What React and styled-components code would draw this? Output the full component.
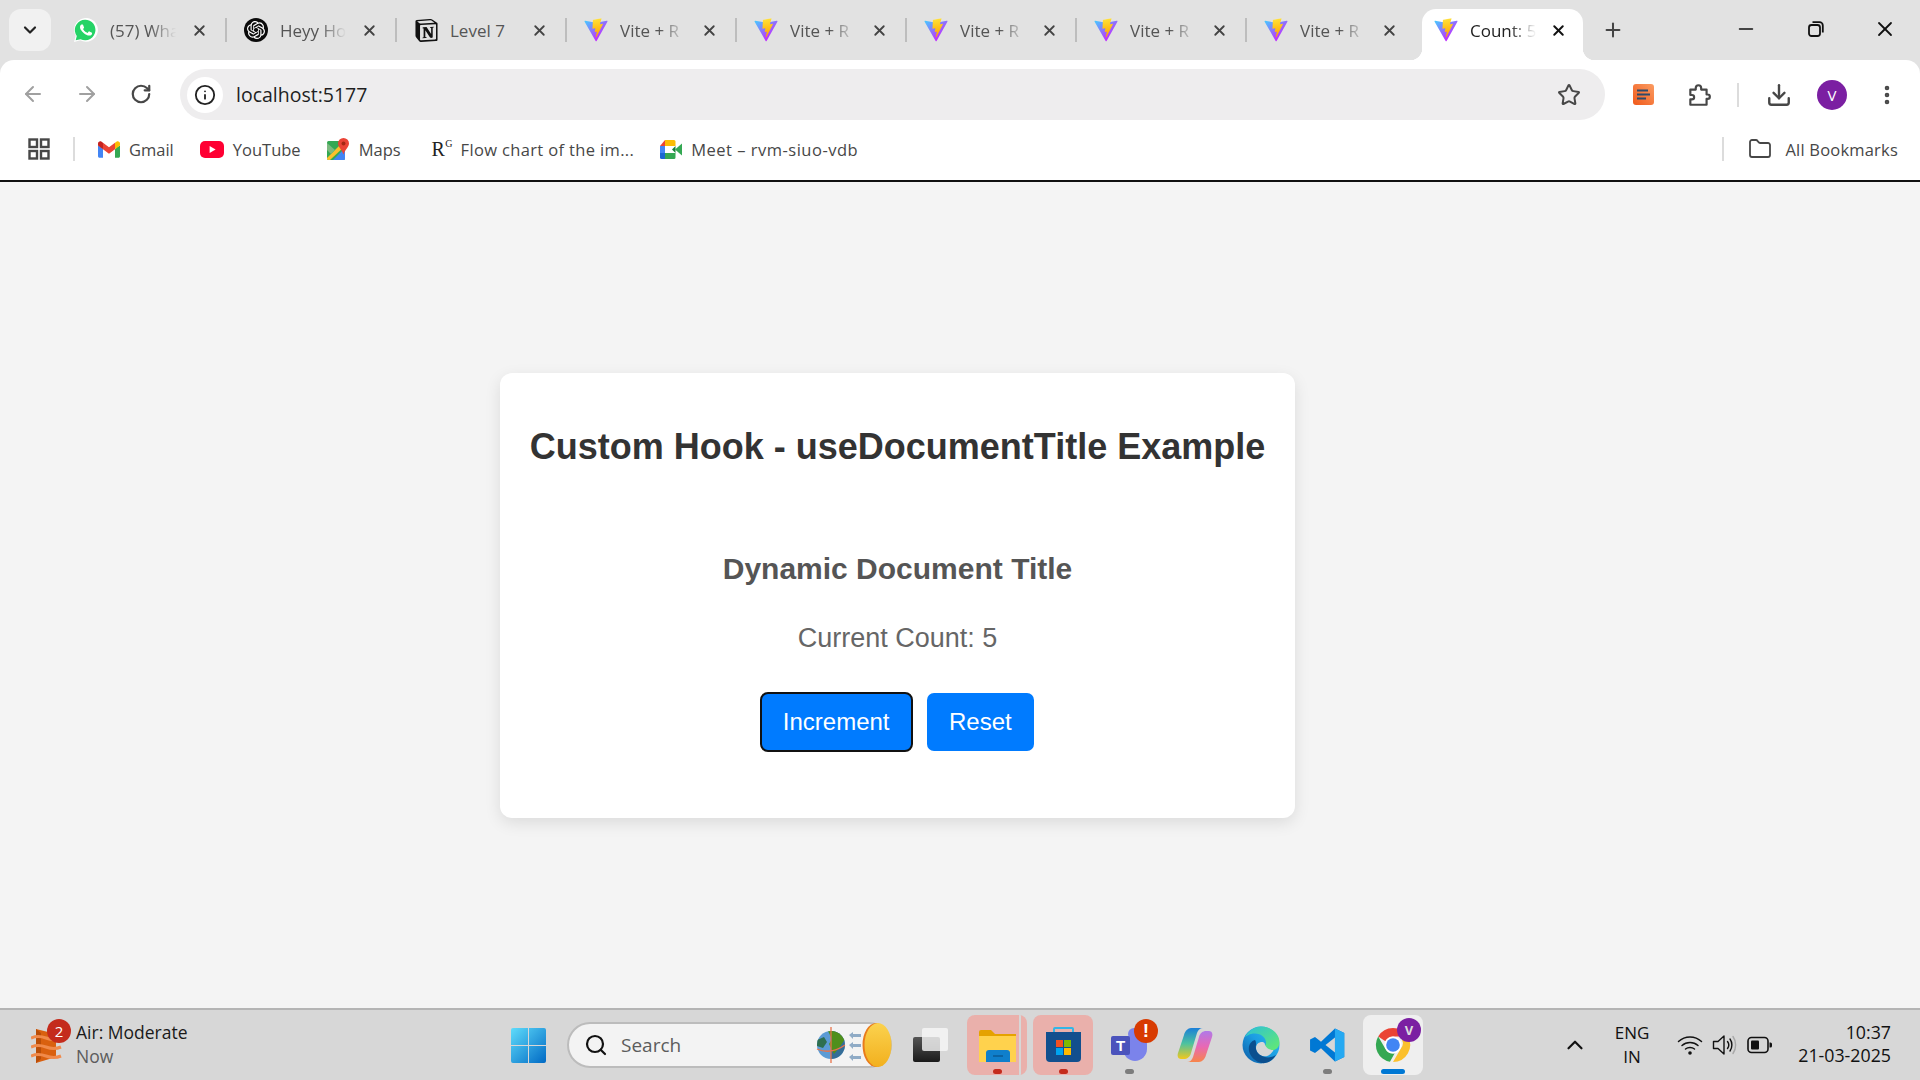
import styled, { createGlobalStyle } from "styled-components";
import { ArrowLeft, ArrowRight, RotateCw, Info, Star, Download, EllipsisVertical, X, Plus, Minus, Search, Folder, ChevronDown, ChevronUp } from "lucide-react";
import { SiOpenai, SiNotion } from "react-icons/si";

const UI_FONT = `"Open Sans", "Noto Sans", sans-serif`;

const GlobalStyle = createGlobalStyle`
  html, body { margin: 0; padding: 0; height: 100%; overflow: hidden; }
  body { font-family: ${UI_FONT}; background: #f4f4f4; }
  * { box-sizing: border-box; }
`;

function ViteLogo({ id }) {
  return (
    <svg width="24" height="24" viewBox="0 0 410 404" fill="none">
      <path d="M399.641 59.5246L215.643 388.545C211.844 395.338 202.084 395.378 198.228 388.618L10.5817 59.5563C6.38087 52.1896 12.6802 43.2665 21.0281 44.7586L205.223 77.6824C206.398 77.8924 207.601 77.8904 208.776 77.6763L389.119 44.8058C397.439 43.2894 403.768 52.1434 399.641 59.5246Z" fill={`url(#va${id})`} />
      <path d="M292.965 1.5744L156.801 28.2552C154.563 28.6937 152.906 30.5903 152.771 32.8664L144.395 174.33C144.198 177.662 147.258 180.248 150.51 179.498L188.42 170.749C191.967 169.931 195.172 173.055 194.443 176.622L183.18 231.775C182.422 235.487 185.907 238.661 189.532 237.56L212.947 230.446C216.577 229.344 220.065 232.527 219.297 236.242L201.398 322.875C200.278 328.294 207.486 331.249 210.492 326.603L212.5 323.5L323.454 102.072C325.312 98.3645 322.108 94.137 318.036 94.9228L279.014 102.454C275.347 103.161 272.227 99.746 273.262 96.1583L298.731 7.86689C299.767 4.27314 296.636 0.855181 292.965 1.5744Z" fill={`url(#vb${id})`} />
      <defs>
        <linearGradient id={`va${id}`} x1="6" y1="33" x2="235" y2="344" gradientUnits="userSpaceOnUse">
          <stop stopColor="#41D1FF" />
          <stop offset="1" stopColor="#BD34FE" />
        </linearGradient>
        <linearGradient id={`vb${id}`} x1="194" y1="8" x2="236" y2="292" gradientUnits="userSpaceOnUse">
          <stop stopColor="#FFEA83" />
          <stop offset="0.08" stopColor="#FFDD35" />
          <stop offset="1" stopColor="#FFA800" />
        </linearGradient>
      </defs>
    </svg>
  );
}

const WhatsappIcon = () => (
  <svg width="24" height="24" viewBox="0 0 24 24">
    <path d="M0 24l1.7-6.2A11.9 11.9 0 1 1 6.3 22.3z" fill="#fff" />
    <path d="M1.7 22.3l1.1-4.3A10.3 10.3 0 1 1 6.6 21.2z" fill="#25D366" />
    <path fill="#fff" d="M17.472 14.382c-.297-.149-1.758-.867-2.03-.967-.273-.099-.471-.148-.67.15-.197.297-.767.966-.94 1.164-.173.199-.347.223-.644.075-.297-.15-1.255-.463-2.39-1.475-.883-.788-1.48-1.761-1.653-2.059-.173-.297-.018-.458.13-.606.134-.133.298-.347.446-.52.149-.174.198-.298.298-.497.099-.198.05-.371-.025-.52-.075-.149-.669-1.612-.916-2.207-.242-.579-.487-.5-.669-.51-.173-.008-.371-.01-.57-.01-.198 0-.52.074-.792.372-.272.297-1.04 1.016-1.04 2.479 0 1.462 1.065 2.875 1.213 3.074.149.198 2.096 3.2 5.077 4.487.709.306 1.262.489 1.694.625.712.227 1.36.195 1.871.118.571-.085 1.758-.719 2.006-1.413.248-.694.248-1.289.173-1.413-.074-.124-.272-.198-.57-.347z" />
  </svg>
);

const OpenaiIcon = () => (
  <DiscIcon><SiOpenai color="#fff" size={18} /></DiscIcon>
);

const NotionIcon = () => <SiNotion color="#111" size={23} />;

const GmailIcon = () => (
  <svg width="22" height="17" viewBox="0 0 256 193">
    <path fill="#4285F4" d="M58.182 192.05V93.14L27.507 65.077 0 49.504v125.091c0 9.658 7.825 17.455 17.455 17.455h40.727Z" />
    <path fill="#34A853" d="M197.818 192.05h40.727c9.659 0 17.455-7.826 17.455-17.455V49.505l-31.156 17.837-27.026 25.798v98.91Z" />
    <path fill="#EA4335" d="m58.182 93.14-4.174-38.647 4.174-36.989L128 69.868l69.818-52.364 4.669 34.992-4.669 40.644L128 145.504z" />
    <path fill="#FBBC04" d="M197.818 17.504V93.14L256 49.504V26.231c0-21.585-24.64-33.89-41.89-20.945l-16.292 13.218Z" />
    <path fill="#C5221F" d="m0 49.504 26.759 20.07L58.182 93.14V17.504L41.89 5.286C24.61-7.66 0 4.646 0 26.23v23.273Z" />
  </svg>
);

const YoutubeIcon = () => (
  <svg width="24" height="17" viewBox="0 0 24 17">
    <rect width="24" height="17" rx="5" fill="#ff0033" />
    <path d="M9.6 5v7l6-3.5z" fill="#fff" />
  </svg>
);

const MapsIcon = () => (
  <svg width="23" height="23" viewBox="0 0 23 23">
    <rect x="0" y="3" width="18" height="19" rx="1.5" fill="#34a853" />
    <path d="M0 20 15 5h3v3L3 22H1.5A1.5 1.5 0 0 1 0 20.5z" fill="#fbc02d" />
    <path d="M6 22 18 10v10.5a1.5 1.5 0 0 1-1.5 1.5z" fill="#4285f4" />
    <path d="M0 5 8 12 4 16 0 12z" fill="#7cb97f" />
    <path d="M16.5 0a5.5 5.5 0 0 1 5.5 5.5c0 3.5-4 6-5.5 11-1.5-5-5.5-7.5-5.5-11A5.5 5.5 0 0 1 16.5 0z" fill="#ea4335" />
    <circle cx="16.5" cy="5.5" r="2" fill="#a52714" />
  </svg>
);

const MeetIcon = () => (
  <svg width="22" height="19" viewBox="0 0 22 19">
    <path d="M5 0H14a1.5 1.5 0 0 1 1.5 1.5V6H5z" fill="#fbbc04" />
    <path d="M5 0v6H0z" fill="#ea4335" />
    <rect x="0" y="6" width="5" height="7" fill="#4285f4" />
    <path d="M0 13h5v6H1.5A1.5 1.5 0 0 1 0 17.5z" fill="#1967d2" />
    <path d="M5 13h10.5v4.5A1.5 1.5 0 0 1 14 19H5z" fill="#34a853" />
    <path d="M15.5 6v7l-3.5-3.5z" fill="#188038" />
    <path d="M15 9.5 22 3.5v12z" fill="#34a853" />
    <rect x="5" y="6" width="7" height="7" fill="#fff" />
  </svg>
);

const ExtensionIcon = () => (
  <svg width="22" height="22" viewBox="0 0 22 22">
    <defs>
      <linearGradient id="ext" x1="0" y1="1" x2="1" y2="0">
        <stop stopColor="#f0591a" />
        <stop offset="1" stopColor="#fb9c62" />
      </linearGradient>
    </defs>
    <rect width="21" height="21" rx="3" fill="url(#ext)" />
    <path d="M4 6.5h11M4 10.5h13M4 14.5h9" stroke="#2d4a6a" strokeWidth="2" />
  </svg>
);

const PuzzleIcon = () => (
  <svg width="26" height="26" viewBox="0 0 24 24" fill="none" stroke="#474747" strokeWidth="2" strokeLinejoin="round">
    <path d="M4 7h5V5.5a2.5 2.5 0 0 1 5 0V7h5v4.5h1a2 2 0 0 1 0 4h-1V21H4v-5h1.5a2 2 0 0 0 0-4H4z" />
  </svg>
);

const AppsIcon = () => (
  <svg width="22" height="22" viewBox="0 0 22 22" fill="none" stroke="#474747" strokeWidth="2.4">
    <rect x="1.5" y="1.5" width="7.5" height="7.5" />
    <rect x="13" y="1.5" width="7.5" height="7.5" />
    <rect x="1.5" y="13" width="7.5" height="7.5" />
    <rect x="13" y="13" width="7.5" height="7.5" />
  </svg>
);

const RestoreIcon = () => (
  <svg width="16" height="16" viewBox="0 0 16 16" fill="none" stroke="#111" strokeWidth="1.8">
    <rect x="1" y="4" width="11" height="11" rx="2.5" />
    <path d="M4.5 1.2h7a3.3 3.3 0 0 1 3.3 3.3v7" />
  </svg>
);

const WeatherIcon = () => (
  <svg width="32" height="36" viewBox="0 0 32 36">
    <path d="M5 1l20 5v23L5 35z" fill="#d9600f" />
    <path d="M5 1l5 4v26l-5 4z" fill="#b94d08" />
    <path d="M0 10q7-3 15 0t15 0M0 19q7-3 15 0t15 0M0 28q7-3 15 0t15 0" stroke="#f08a4b" strokeWidth="3" fill="none" />
  </svg>
);

const WindowsIcon = () => (
  <svg width="35" height="35" viewBox="0 0 35 35">
    <defs>
      <linearGradient id="win" x1="0" y1="0" x2="1" y2="1">
        <stop stopColor="#5fdcfb" />
        <stop offset="1" stopColor="#0069c4" />
      </linearGradient>
    </defs>
    <path d="M0 2a2 2 0 0 1 2-2h15v17H0zM18 0h15a2 2 0 0 1 2 2v15H18zM0 18h17v17H2a2 2 0 0 1-2-2zM18 18h17v15a2 2 0 0 1-2 2H18z" fill="url(#win)" />
  </svg>
);

const SearchArt = () => (
  <svg width="76" height="46" viewBox="0 0 76 46">
    <defs>
      <clipPath id="earth"><circle cx="15" cy="23" r="14" /></clipPath>
      <linearGradient id="sun" x1="0" y1="0" x2="0" y2="1">
        <stop stopColor="#fbd24e" />
        <stop offset="1" stopColor="#f2b01e" />
      </linearGradient>
    </defs>
    <circle cx="15" cy="23" r="14" fill="#5b9bd5" />
    <g clipPath="url(#earth)">
      <path d="M15 9h15v28H15z" fill="#1a4f6e" opacity="0.6" />
      <path d="M12 9c8-2 14 2 17 8l-6 9-5 6-5-10 3-5z" fill="#4f8f1c" />
      <path d="M1 18l7-3 3 5-4 6-6-2z" fill="#2e6f4f" />
    </g>
    <path d="M1 27q14 6 28-4M15 5v36" stroke="#e8734a" strokeWidth="1.3" fill="none" />
    <path d="M33 13l4-3v2h8v3h-8v2zM33 23l4-3v2h8v3h-8v2zM33 35l4-3v2h8v3h-8v2z" fill="#8fabc6" />
    <ellipse cx="60" cy="23" rx="13.5" ry="22" fill="#e97b1b" />
    <ellipse cx="62" cy="23" rx="13.5" ry="22" fill="url(#sun)" />
  </svg>
);

const FolderApp = () => (
  <svg width="37" height="33" viewBox="0 0 37 33">
    <path d="M0 3a2 2 0 0 1 2-2h10l4 4h21v5H0z" fill="#e5a200" />
    <path d="M0 7h37v26H0z" fill="#ffd24d" />
    <path d="M7 33V24a3 3 0 0 1 3-3h18a3 3 0 0 1 3 3v9z" fill="#0f7fcc" />
    <path d="M14 27h10" stroke="#0b5a96" strokeWidth="1.5" />
  </svg>
);

const StoreApp = () => (
  <svg width="35" height="36" viewBox="0 0 35 36">
    <path d="M8 5V2a1 1 0 0 1 1-1h17a1 1 0 0 1 1 1v3" fill="none" stroke="#33b6e6" strokeWidth="2" />
    <path d="M0 5h35v26a4 4 0 0 1-4 4H4a4 4 0 0 1-4-4z" fill="#124f8e" />
    <rect x="10" y="13" width="7" height="7" fill="#f25022" />
    <rect x="18" y="13" width="7" height="7" fill="#7fba00" />
    <rect x="10" y="21" width="7" height="7" fill="#00a4ef" />
    <rect x="18" y="21" width="7" height="7" fill="#ffb900" />
  </svg>
);

const TeamsApp = () => (
  <svg width="36" height="34" viewBox="0 0 36 34">
    <path d="M12 8h21a3 3 0 0 1 3 3v10c0 7-6 12-12 12S12 28 12 21z" fill="#7b83eb" />
    <circle cx="23" cy="6" r="6" fill="#7b83eb" />
    <rect x="0" y="8" width="19" height="19" rx="2" fill="#4b53bc" />
    <text x="9.5" y="23" textAnchor="middle" fontFamily="Liberation Sans, sans-serif" fontSize="15" fontWeight="700" fill="#fff">T</text>
  </svg>
);

const CopilotApp = () => (
  <svg width="36" height="36" viewBox="0 0 36 36">
    <defs>
      <linearGradient id="copa" x1="0" y1="0" x2="0" y2="1">
        <stop stopColor="#1b7fd8" />
        <stop offset="0.5" stopColor="#4cc2a0" />
        <stop offset="1" stopColor="#f2c81c" />
      </linearGradient>
      <linearGradient id="copb" x1="0" y1="0" x2="0" y2="1">
        <stop stopColor="#b07ae8" />
        <stop offset="0.5" stopColor="#e868b5" />
        <stop offset="1" stopColor="#f7854a" />
      </linearGradient>
    </defs>
    <path d="M14 1h12c-3 0-5 2-6 5l-6 20c-1 4-4 6-7 6H4c-3 0-4-3-3-6l6-18c1-4 4-7 7-7z" fill="url(#copa)" />
    <path d="M22 35H10c3 0 5-2 6-5l6-20c1-4 4-6 7-6h3c3 0 4 3 3 6l-6 18c-1 4-4 7-7 7z" fill="url(#copb)" />
  </svg>
);

const EdgeApp = () => (
  <svg width="38" height="38" viewBox="0 0 38 38">
    <defs>
      <linearGradient id="edga" x1="0" y1="1" x2="1" y2="0">
        <stop stopColor="#0c59a4" />
        <stop offset="0.5" stopColor="#1b9de2" />
        <stop offset="1" stopColor="#35c1f1" />
      </linearGradient>
      <linearGradient id="edgb" x1="0" y1="0" x2="1" y2="1">
        <stop stopColor="#2bc0d8" />
        <stop offset="1" stopColor="#66eb6e" />
      </linearGradient>
    </defs>
    <circle cx="19" cy="19" r="18.5" fill="url(#edga)" />
    <path d="M3 11C7 4 13 .5 19 .5c10 0 18.5 7 18.5 16 0 5-4 8-9 8-4 0-7-2-6.5-4 1-1 2-2 2-4 0-5-5-9-11-9S5 10 3 11z" fill="url(#edgb)" />
    <path d="M14 22c0-4 3-6 6-6 1 0 2 .5 2.5 1 .5 3 3 7 9 7-3 6-8 7-11 6-4-1-6.5-4-6.5-8z" fill="#d6d6d6" />
    <path d="M13 14c-4 1-7 5-6 11 1 5 6 11 13 12 6 1 11-3 14-8-5 3-10 3-14 1-4-2-7-6-6-11 0-2 0-4-1-5z" fill="#0b4f8f" />
  </svg>
);

const VscodeApp = () => (
  <svg width="36" height="36" viewBox="0 0 24 24">
    <path d="M17.3 1 23.5 4v16l-6.2 3L8 14.2l-4 3.1L.7 15.7V8.3L4 6.7l4 3.1z M17.3 7 11 12l6.3 5z" fill="#0078d4" fillRule="evenodd" />
    <path d="M17.3 1 23.5 4v16l-6.2 3z" fill="#25a9f2" />
  </svg>
);

const ChromeApp = () => (
  <svg width="38" height="38" viewBox="0 0 40 40">
    <path d="M20 2a18 18 0 0 1 15.6 9H20a9 9 0 0 0-8 5L4.4 11A18 18 0 0 1 20 2z" fill="#ea4335" />
    <path d="M4.4 11l7.8 13.5a9 9 0 0 0 9.6 4.3l-5 8.9A18 18 0 0 1 4.4 11z" fill="#34a853" />
    <path d="M35.6 11H27a9 9 0 0 1 .8 13.5L20 38a18 18 0 0 0 15.6-27z" fill="#fbc02d" />
    <circle cx="20" cy="20" r="9" fill="#fff" />
    <circle cx="20" cy="20" r="7.2" fill="#4285f4" />
  </svg>
);

const WifiIcon = () => (
  <svg width="26" height="22" viewBox="0 0 26 22" fill="none" stroke="#111" strokeWidth="1.5" strokeLinecap="round">
    <path d="M1.5 7.5C8 1.5 18 1.5 24.5 7.5M5 11.5c4.5-4 11.5-4 16 0M8.5 15c2.5-2 6.5-2 9 0" />
    <circle cx="13" cy="19" r="1.8" fill="#111" stroke="none" />
  </svg>
);

const SpeakerIcon = () => (
  <svg width="26" height="22" viewBox="0 0 26 22" fill="none" stroke="#111" strokeWidth="1.4" strokeLinejoin="round" strokeLinecap="round">
    <path d="M1.5 7.5H6L12 2v18l-6-5.5H1.5z" />
    <path d="M15.5 7.5c1.5 2 1.5 5 0 7M18 5c2.5 3.5 2.5 8.5 0 12" />
    <path d="M21 2.5c3.5 5 3.5 12 0 17" stroke="#a8a8a8" />
  </svg>
);

const BatteryIcon = () => (
  <svg width="26" height="18" viewBox="0 0 26 18">
    <rect x="1" y="1.5" width="20" height="15" rx="3.5" fill="none" stroke="#111" strokeWidth="1.6" />
    <rect x="4" y="4.5" width="8" height="9" rx="1" fill="#111" />
    <path d="M22.5 6.5h1a1.5 1.5 0 0 1 1.5 1.5v2a1.5 1.5 0 0 1-1.5 1.5h-1z" fill="#111" />
  </svg>
);

const RgIcon = () => <RgMark>R<sup>G</sup></RgMark>;

const tabs = [
  { title: "(57) Wha", icon: <WhatsappIcon /> },
  { title: "Heyy Ho", icon: <OpenaiIcon /> },
  { title: "Level 7", icon: <NotionIcon /> },
  { title: "Vite + R", icon: <ViteLogo id="1" /> },
  { title: "Vite + R", icon: <ViteLogo id="2" /> },
  { title: "Vite + R", icon: <ViteLogo id="3" /> },
  { title: "Vite + R", icon: <ViteLogo id="4" /> },
  { title: "Vite + R", icon: <ViteLogo id="5" /> },
];

const bookmarks = [
  { label: "Gmail", icon: <GmailIcon /> },
  { label: "YouTube", icon: <YoutubeIcon /> },
  { label: "Maps", icon: <MapsIcon /> },
  { label: "Flow chart of the im...", icon: <RgIcon />, track: 0.35 },
  { label: "Meet – rvm-siuo-vdb", icon: <MeetIcon />, track: 0.5 },
];

function App() {
  return (
    <>
      <GlobalStyle />
      <Screen>
        <Browser>
          <TabStrip>
            <TabSearch><ChevronDown size={20} strokeWidth={2.6} color="#222" /></TabSearch>
            {tabs.map((tab, i) => (
              <Tab key={i}>
                <TabIcon>{tab.icon}</TabIcon>
                <TabTitle $plain={tab.title === "Level 7"}>{tab.title}</TabTitle>
                <TabClose><X size={17} strokeWidth={2.6} color="#444" /></TabClose>
                {i < tabs.length - 1 && <TabDivider />}
              </Tab>
            ))}
            <ActiveTab>
              <TabIcon><ViteLogo id="6" /></TabIcon>
              <ActiveTitle>Count: 5</ActiveTitle>
              <TabClose><X size={17} strokeWidth={2.8} color="#111" /></TabClose>
            </ActiveTab>
            <NewTab><Plus size={22} strokeWidth={2.2} color="#444" /></NewTab>
            <WindowControls>
              <WindowButton><Minus size={22} strokeWidth={1.8} color="#111" /></WindowButton>
              <WindowButton><RestoreIcon /></WindowButton>
              <WindowButton><X size={24} strokeWidth={1.8} color="#111" /></WindowButton>
            </WindowControls>
          </TabStrip>
          <Toolbar>
            <NavButton><ArrowLeft size={24} strokeWidth={2} color="#a0a0a0" /></NavButton>
            <NavButton><ArrowRight size={24} strokeWidth={2} color="#a0a0a0" /></NavButton>
            <NavButton><RotateCw size={22} strokeWidth={2.4} color="#474747" /></NavButton>
            <AddressBar>
              <SiteInfo><Info size={22} strokeWidth={2} color="#222" /></SiteInfo>
              <AddressText>localhost:5177</AddressText>
              <Star size={24} strokeWidth={2} color="#474747" />
            </AddressBar>
            <ToolIcon $w={58} $ml={10}><ExtensionIcon /></ToolIcon>
            <ToolIcon $w={34} $ml={9}><PuzzleIcon /></ToolIcon>
            <ToolDivider />
            <ToolIcon $w={40} $ml={20}><Download size={26} strokeWidth={2.2} color="#474747" /></ToolIcon>
            <Avatar>V</Avatar>
            <ToolIcon $w={34} $ml={23}><EllipsisVertical size={24} strokeWidth={2.6} color="#474747" /></ToolIcon>
          </Toolbar>
          <BookmarkBar>
            <AppsButton><AppsIcon /></AppsButton>
            <BarDivider />
            <BookmarkList>
              {bookmarks.map((item) => (
                <Bookmark key={item.label} $track={item.track}>
                  {item.icon}
                  <span>{item.label}</span>
                </Bookmark>
              ))}
            </BookmarkList>
            <AllBookmarks>
              <BarDivider />
              <Folder size={24} strokeWidth={1.8} color="#474747" />
              <span>All Bookmarks</span>
            </AllBookmarks>
          </BookmarkBar>
        </Browser>

        <Page>
          <Card>
            <Heading>Custom Hook - useDocumentTitle Example</Heading>
            <SubHeading>Dynamic Document Title</SubHeading>
            <CountText>Current Count: 5</CountText>
            <ButtonRow>
              <ActionButton $focused>Increment</ActionButton>
              <ActionButton>Reset</ActionButton>
            </ButtonRow>
          </Card>
        </Page>

        <Taskbar>
          <Widget>
            <WidgetIcon>
              <WeatherIcon />
              <WidgetBadge>2</WidgetBadge>
            </WidgetIcon>
            <WidgetText>
              <strong>Air: Moderate</strong>
              <span>Now</span>
            </WidgetText>
          </Widget>
          <AppSlot><WindowsIcon /></AppSlot>
          <SearchBox>
            <Search size={24} strokeWidth={2.2} color="#111" />
            <span>Search</span>
            <SearchArt />
          </SearchBox>
          <Apps>
            <AppSlot>
              <TaskViewBack />
              <TaskViewFront />
            </AppSlot>
            <AppSlot $tint>
              <FolderApp />
              <StackEdge />
              <RunDot $color="#c42b1c" />
            </AppSlot>
            <AppSlot $tint>
              <StoreApp />
              <RunDot $color="#c42b1c" />
            </AppSlot>
            <AppSlot>
              <TeamsApp />
              <AlertBadge>!</AlertBadge>
              <RunDot $color="#7d7d7d" />
            </AppSlot>
            <AppSlot><CopilotApp /></AppSlot>
            <AppSlot><EdgeApp /></AppSlot>
            <AppSlot>
              <VscodeApp />
              <RunDot $color="#7d7d7d" />
            </AppSlot>
            <AppSlot $active>
              <ChromeApp />
              <ProfileBadge>V</ProfileBadge>
              <ActiveBar />
            </AppSlot>
          </Apps>
          <Tray>
            <TrayChevron><ChevronUp size={26} strokeWidth={2} color="#111" /></TrayChevron>
            <Language><span>ENG</span><span>IN</span></Language>
            <TrayIcons>
              <WifiIcon />
              <SpeakerIcon />
              <BatteryIcon />
            </TrayIcons>
            <Clock><span>10:37</span><span>21-03-2025</span></Clock>
          </Tray>
        </Taskbar>
      </Screen>
    </>
  );
}

export default App;

const Screen = styled.div`
  width: 1920px;
  height: 1080px;
  display: flex;
  flex-direction: column;
`;

const Browser = styled.header`
  background: #e2e2e2;
  border-bottom: 2px solid #111;
  flex-shrink: 0;
`;

const TabStrip = styled.div`
  height: 60px;
  display: flex;
  align-items: flex-end;
  padding-left: 9px;
`;

const TabSearch = styled.div`
  width: 42px;
  height: 42px;
  margin: 0 6px 9px 0;
  border-radius: 12px;
  background: #f1f1f1;
  display: flex;
  align-items: center;
  justify-content: center;
`;

const Tab = styled.div`
  position: relative;
  width: 170px;
  height: 60px;
  padding: 0 18px 0 17px;
  display: flex;
  align-items: center;
  color: #555;
  font-size: 17px;
`;

const TabIcon = styled.div`
  width: 24px;
  height: 24px;
  flex-shrink: 0;
  display: flex;
  align-items: center;
  justify-content: center;
`;

const DiscIcon = styled.div`
  width: 24px;
  height: 24px;
  border-radius: 50%;
  background: #0b0b0b;
  display: flex;
  align-items: center;
  justify-content: center;
`;

const TabTitle = styled.div`
  width: 72px;
  margin-left: 12px;
  white-space: nowrap;
  mask-image: ${(p) => (p.$plain ? "none" : "linear-gradient(to right, #000 55%, transparent 92%)")};
`;

const ActiveTitle = styled(TabTitle)`
  color: #222;
`;

const TabClose = styled.div`
  width: 20px;
  height: 20px;
  margin-left: auto;
  display: flex;
  align-items: center;
  justify-content: center;
`;

const TabDivider = styled.div`
  position: absolute;
  right: 0;
  top: 18px;
  width: 2px;
  height: 24px;
  background: #bdbdbd;
`;

const ActiveTab = styled.div`
  position: relative;
  width: 161px;
  height: 51px;
  margin-left: 5px;
  padding: 0 15px 0 12px;
  background: #fff;
  border-radius: 14px 14px 0 0;
  display: flex;
  align-items: center;
  font-size: 17px;
  padding-bottom: 9px;

  &::before,
  &::after {
    content: "";
    position: absolute;
    bottom: 0;
    width: 12px;
    height: 12px;
  }
  &::before {
    left: -12px;
    background: radial-gradient(circle at 0 0, transparent 12px, #fff 12.5px);
  }
  &::after {
    right: -12px;
    background: radial-gradient(circle at 100% 0, transparent 12px, #fff 12.5px);
  }
`;

const NewTab = styled.div`
  width: 40px;
  height: 60px;
  margin-left: 10px;
  display: flex;
  align-items: center;
  justify-content: center;
`;

const WindowControls = styled.div`
  margin-left: auto;
  display: flex;
`;

const WindowButton = styled.div`
  width: 69.5px;
  height: 60px;
  padding-bottom: 2px;
  display: flex;
  align-items: center;
  justify-content: center;
`;

const Toolbar = styled.div`
  height: 60px;
  padding: 0 0 0 6px;
  background: #fff;
  border-radius: 14px 14px 0 0;
  display: flex;
  align-items: center;
`;

const NavButton = styled.div`
  width: 54px;
  height: 44px;
  margin-top: 8px;
  display: flex;
  align-items: center;
  justify-content: center;
`;

const AddressBar = styled.div`
  width: 1425px;
  height: 51px;
  margin: 9px 0 0 12px;
  padding: 0 24px 0 7px;
  border-radius: 26px;
  background: #eeedee;
  display: flex;
  align-items: center;
`;

const SiteInfo = styled.div`
  width: 36px;
  height: 36px;
  border-radius: 50%;
  background: #fff;
  display: flex;
  align-items: center;
  justify-content: center;
`;

const AddressText = styled.div`
  flex: 1;
  margin-left: 13px;
  color: #1f1f1f;
  font-size: 19.5px;
`;

const ToolIcon = styled.div`
  width: ${(p) => p.$w}px;
  height: 44px;
  margin: 9px 0 0 ${(p) => p.$ml || 0}px;
  display: flex;
  align-items: center;
  justify-content: center;
`;

const ToolDivider = styled.div`
  width: 2px;
  height: 24px;
  margin: 9px 0 0 21px;
  background: #dcdcdc;
`;

const Avatar = styled.div`
  width: 30px;
  height: 30px;
  margin: 9px 0 0 18px;
  border-radius: 50%;
  background: #7b1fa2;
  color: #fff;
  font-size: 15px;
  display: flex;
  align-items: center;
  justify-content: center;
`;

const BookmarkBar = styled.div`
  height: 60px;
  background: #fff;
  padding: 0 22px 2px 28px;
  display: flex;
  align-items: center;
  color: #474747;
  font-size: 16.5px;
`;

const AppsButton = styled.div`
  width: 22px;
  height: 22px;
`;

const BarDivider = styled.div`
  width: 2px;
  height: 24px;
  margin-left: 23px;
  background: #dcdcdc;
`;

const BookmarkList = styled.div`
  margin-left: 23px;
  margin-right: auto;
  display: flex;
  align-items: center;
  gap: 26px;
`;

const Bookmark = styled.div`
  display: flex;
  align-items: center;
  gap: 9px;
  white-space: nowrap;
  letter-spacing: ${(p) => p.$track || 0}px;
`;

const RgMark = styled.div`
  width: 20px;
  margin-left: 5px;
  color: #222;
  font-family: "Liberation Serif", serif;
  font-size: 20px;
  line-height: 22px;

  sup {
    font-size: 10px;
    line-height: 0;
    vertical-align: 9px;
  }
`;

const AllBookmarks = styled.div`
  display: flex;
  align-items: center;
  gap: 13px;
  letter-spacing: 0.2px;

  ${BarDivider} {
    margin: 0 11px 0 0;
  }
`;

const Page = styled.main`
  flex: 1;
  min-height: 0;
  padding-left: 500px;
  display: flex;
  align-items: center;
  background: #f4f4f4;
`;

const Card = styled.section`
  width: 795px;
  height: 445px;
  padding-top: 53px;
  background: #fff;
  border-radius: 12px;
  box-shadow: 0 5px 16px rgba(0, 0, 0, 0.1);
  display: flex;
  flex-direction: column;
  align-items: center;
  font-family: "Liberation Sans", Arial, sans-serif;
`;

const Heading = styled.h1`
  margin: 0;
  color: #333;
  font-size: 36px;
  line-height: 42px;
  font-weight: 700;
  white-space: nowrap;
`;

const SubHeading = styled.h2`
  margin: 84px 0 0;
  color: #555;
  font-size: 30px;
  line-height: 34px;
  font-weight: 700;
`;

const CountText = styled.p`
  margin: 35px 0 0;
  color: #666;
  font-size: 27px;
  line-height: 34px;
`;

const ButtonRow = styled.div`
  margin-top: 38px;
  display: flex;
  gap: 15px;
`;

const ActionButton = styled.button`
  height: 58px;
  padding: 0 ${(p) => (p.$focused ? 22 : 22.5)}px;
  border: 0;
  border-radius: 7px;
  background: #007bff;
  color: #fff;
  font-family: inherit;
  font-size: 24px;
  outline: ${(p) => (p.$focused ? "2.5px solid #111" : "none")};
  outline-offset: -1px;
`;

const Taskbar = styled.footer`
  position: relative;
  height: 72px;
  flex-shrink: 0;
  border-top: 2px solid #b4b4b4;
  background: #d7d7d7;
  display: flex;
  align-items: center;
`;

const Widget = styled.div`
  width: 498px;
  padding-left: 31px;
  display: flex;
  align-items: center;
`;

const WidgetIcon = styled.div`
  position: relative;
  width: 33px;
  height: 38px;
  margin-top: 4px;
`;

const WidgetBadge = styled.div`
  position: absolute;
  right: -7px;
  top: -9px;
  width: 24px;
  height: 24px;
  border-radius: 50%;
  background: #c42b1c;
  color: #fff;
  font-size: 15px;
  line-height: 24px;
  text-align: center;
`;

const WidgetText = styled.div`
  margin: 0 0 2px 12px;
  display: flex;
  flex-direction: column;
  font-size: 17.5px;
  line-height: 24px;

  strong {
    color: #1a1a1a;
    font-weight: 400;
  }
  span {
    color: #5c5c5c;
  }
`;

const AppSlot = styled.div`
  position: relative;
  width: 60px;
  height: 60px;
  flex-shrink: 0;
  border-radius: 8px;
  background: ${(p) => (p.$tint ? "#eab0ab" : p.$active ? "#efefef" : "transparent")};
  display: flex;
  align-items: center;
  justify-content: center;
`;

const SearchBox = styled.div`
  width: 325px;
  height: 46px;
  margin-left: 9px;
  padding-left: 15px;
  border: 2px solid #bcbcbc;
  border-radius: 23px;
  background: #f3f3f3;
  display: flex;
  align-items: center;
  color: #5c5c5c;
  font-size: 19px;

  span {
    flex: 1;
    margin-left: 13px;
  }
  svg:last-child {
    flex-shrink: 0;
    margin-right: -2px;
  }
`;

const Apps = styled.div`
  margin-left: 9px;
  display: flex;
  gap: 6px;
`;

const TaskViewBack = styled.div`
  position: absolute;
  left: 12px;
  top: 22px;
  width: 27px;
  height: 25px;
  border-radius: 2px;
  background: linear-gradient(#555, #1a1a1a);
`;

const TaskViewFront = styled.div`
  position: absolute;
  left: 21px;
  top: 13px;
  width: 26px;
  height: 23px;
  border-radius: 2px;
  background: rgba(248, 248, 248, 0.8);
`;

const StackEdge = styled.div`
  position: absolute;
  right: 0;
  top: 0;
  width: 8px;
  height: 60px;
  border-left: 2px solid #d7d7d7;
  border-radius: 0 8px 8px 0;
`;

const RunDot = styled.div`
  position: absolute;
  left: 50%;
  bottom: 1px;
  width: 9px;
  height: 5px;
  margin-left: -4.5px;
  border-radius: 3px;
  background: ${(p) => p.$color};
`;

const AlertBadge = styled.div`
  position: absolute;
  right: 1px;
  top: 4px;
  width: 24px;
  height: 24px;
  border-radius: 50%;
  background: #d83b01;
  color: #fff;
  font-family: "Liberation Sans", sans-serif;
  font-weight: 700;
  font-size: 19px;
  line-height: 24px;
  text-align: center;
`;

const ProfileBadge = styled.div`
  position: absolute;
  right: 2px;
  top: 3px;
  width: 24px;
  height: 24px;
  border-radius: 50%;
  background: #7b1fa2;
  color: #ddd;
  font-size: 13px;
  font-weight: 700;
  line-height: 24px;
  text-align: center;
`;

const ActiveBar = styled.div`
  position: absolute;
  left: 18px;
  bottom: 1px;
  width: 24px;
  height: 5px;
  border-radius: 3px;
  background: #0078d4;
`;

const Tray = styled.div`
  flex: 1;
  padding-left: 139px;
  display: flex;
  align-items: center;
`;

const TrayChevron = styled.div`
  width: 26px;
  height: 26px;
`;

const Language = styled.div`
  width: 60px;
  margin-left: 14px;
  display: flex;
  flex-direction: column;
  align-items: center;
  color: #111;
  font-size: 17px;
  line-height: 24px;
`;

const TrayIcons = styled.div`
  margin-left: 15px;
  display: flex;
  align-items: center;
  gap: 9px;
`;

const Clock = styled.div`
  margin: 0 29px 2px auto;
  display: flex;
  flex-direction: column;
  align-items: flex-end;
  color: #111;
  font-size: 17.8px;
  line-height: 23px;
`;
